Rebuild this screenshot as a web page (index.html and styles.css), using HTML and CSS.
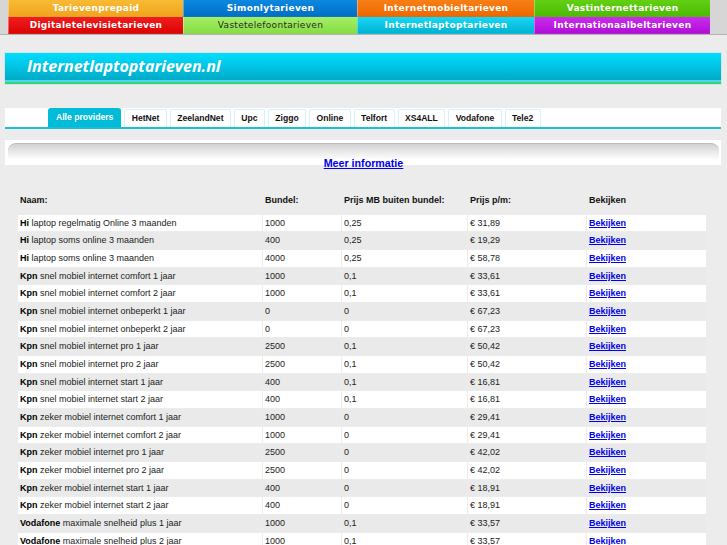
FILE: index.html
```html
<!DOCTYPE html>
<html lang="nl">
<head>
<meta charset="utf-8">
<title>Internetlaptoptarieven.nl</title>
<link rel="stylesheet" href="styles.css">
</head>
<body>
<div class="topbar">
  <nav class="nav">
    <a class="c-prepaid" href="#">Tarievenprepaid</a>
    <a class="c-simonly" href="#">Simonlytarieven</a>
    <a class="c-mobiel" href="#">Internetmobieltarieven</a>
    <a class="c-vastint" href="#">Vastinternettarieven</a>
    <a class="c-tv" href="#">Digitaletelevisietarieven</a>
    <a class="c-tel" href="#">Vastetelefoontarieven</a>
    <a class="c-laptop" href="#">Internetlaptoptarieven</a>
    <a class="c-int" href="#">Internationaalbeltarieven</a>
  </nav>
</div>
<div class="container">
  <div class="brand"><span class="brand-title">Internetlaptoptarieven.nl</span></div>
  <div class="tabs">
    <a class="tab active" href="#">Alle providers</a>
    <a class="tab" href="#">HetNet</a>
    <a class="tab" href="#">ZeelandNet</a>
    <a class="tab" href="#">Upc</a>
    <a class="tab" href="#">Ziggo</a>
    <a class="tab" href="#">Online</a>
    <a class="tab" href="#">Telfort</a>
    <a class="tab" href="#">XS4ALL</a>
    <a class="tab" href="#">Vodafone</a>
    <a class="tab" href="#">Tele2</a>
  </div>
  <div class="info">
    <div class="info-bar"></div>
    <div class="info-link"><a href="#">Meer informatie</a></div>
  </div>
  <table class="rates">
    <thead>
      <tr>
        <th class="w-name">Naam:</th>
        <th class="w-bundel">Bundel:</th>
        <th class="w-mb">Prijs MB buiten bundel:</th>
        <th class="w-pm">Prijs p/m:</th>
        <th class="w-bek">Bekijken</th>
      </tr>
    </thead>
    <tbody>
      <tr><td><b>Hi</b> laptop regelmatig Online 3 maanden</td><td>1000</td><td>0,25</td><td>€ 31,89</td><td><a href="#">Bekijken</a></td></tr>
      <tr><td><b>Hi</b> laptop soms online 3 maanden</td><td>400</td><td>0,25</td><td>€ 19,29</td><td><a href="#">Bekijken</a></td></tr>
      <tr><td><b>Hi</b> laptop soms online 3 maanden</td><td>4000</td><td>0,25</td><td>€ 58,78</td><td><a href="#">Bekijken</a></td></tr>
      <tr><td><b>Kpn</b> snel mobiel internet comfort 1 jaar</td><td>1000</td><td>0,1</td><td>€ 33,61</td><td><a href="#">Bekijken</a></td></tr>
      <tr><td><b>Kpn</b> snel mobiel internet comfort 2 jaar</td><td>1000</td><td>0,1</td><td>€ 33,61</td><td><a href="#">Bekijken</a></td></tr>
      <tr><td><b>Kpn</b> snel mobiel internet onbeperkt 1 jaar</td><td>0</td><td>0</td><td>€ 67,23</td><td><a href="#">Bekijken</a></td></tr>
      <tr><td><b>Kpn</b> snel mobiel internet onbeperkt 2 jaar</td><td>0</td><td>0</td><td>€ 67,23</td><td><a href="#">Bekijken</a></td></tr>
      <tr><td><b>Kpn</b> snel mobiel internet pro 1 jaar</td><td>2500</td><td>0,1</td><td>€ 50,42</td><td><a href="#">Bekijken</a></td></tr>
      <tr><td><b>Kpn</b> snel mobiel internet pro 2 jaar</td><td>2500</td><td>0,1</td><td>€ 50,42</td><td><a href="#">Bekijken</a></td></tr>
      <tr><td><b>Kpn</b> snel mobiel internet start 1 jaar</td><td>400</td><td>0,1</td><td>€ 16,81</td><td><a href="#">Bekijken</a></td></tr>
      <tr><td><b>Kpn</b> snel mobiel internet start 2 jaar</td><td>400</td><td>0,1</td><td>€ 16,81</td><td><a href="#">Bekijken</a></td></tr>
      <tr><td><b>Kpn</b> zeker mobiel internet comfort 1 jaar</td><td>1000</td><td>0</td><td>€ 29,41</td><td><a href="#">Bekijken</a></td></tr>
      <tr><td><b>Kpn</b> zeker mobiel internet comfort 2 jaar</td><td>1000</td><td>0</td><td>€ 29,41</td><td><a href="#">Bekijken</a></td></tr>
      <tr><td><b>Kpn</b> zeker mobiel internet pro 1 jaar</td><td>2500</td><td>0</td><td>€ 42,02</td><td><a href="#">Bekijken</a></td></tr>
      <tr><td><b>Kpn</b> zeker mobiel internet pro 2 jaar</td><td>2500</td><td>0</td><td>€ 42,02</td><td><a href="#">Bekijken</a></td></tr>
      <tr><td><b>Kpn</b> zeker mobiel internet start 1 jaar</td><td>400</td><td>0</td><td>€ 18,91</td><td><a href="#">Bekijken</a></td></tr>
      <tr><td><b>Kpn</b> zeker mobiel internet start 2 jaar</td><td>400</td><td>0</td><td>€ 18,91</td><td><a href="#">Bekijken</a></td></tr>
      <tr><td><b>Vodafone</b> maximale snelheid plus 1 jaar</td><td>1000</td><td>0,1</td><td>€ 33,57</td><td><a href="#">Bekijken</a></td></tr>
      <tr><td><b>Vodafone</b> maximale snelheid plus 2 jaar</td><td>1000</td><td>0,1</td><td>€ 33,57</td><td><a href="#">Bekijken</a></td></tr>
    </tbody>
  </table>
</div>
</body>
</html>
```
FILE: styles.css
```css
html, body {
  margin: 0;
  padding: 0;
}
body {
  background: #ececec;
  font-family: "Liberation Sans", Arial, sans-serif;
  color: #222;
}

/* top navigation */
.topbar {
  background: #d6d6d6;
  border-bottom: 1px solid #b4b4b4;
  padding-left: 8px;
  height: 34px;
}
.nav {
  display: grid;
  grid-template-columns: 175px 174px 177px 176px;
  grid-template-rows: 17px 17px;
}
.nav a {
  display: flex;
  align-items: center;
  justify-content: center;
  font-family: "DejaVu Sans", Verdana, sans-serif;
  font-weight: bold;
  font-size: 9px;
  letter-spacing: 0.3px;
  color: #fff;
  text-decoration: none;
  border-bottom: 1px solid rgba(0, 0, 0, 0.12);
  border-left: 1px solid rgba(255, 255, 255, 0.35);
  box-sizing: border-box;
}
.c-prepaid { background: linear-gradient(#f9bb34, #f0a41e); }
.c-simonly { background: linear-gradient(#0c88e0, #006fc6); }
.c-mobiel { background: linear-gradient(#f87e16, #ee6900); }
.c-vastint { background: linear-gradient(#62d014, #4cbb02); }
.c-tv { background: linear-gradient(#f01e1e, #dc0404); }
.nav .c-tel {
  background: linear-gradient(#a6ee66, #86de44);
  color: #2a2a2a;
  font-weight: normal;
}
.c-laptop { background: linear-gradient(#18d8f6, #00b2d2); }
.c-int { background: linear-gradient(#cc2cec, #b00ed8); }

/* page container */
.container {
  width: 716px;
  margin: 18px 0 0 5px;
}

.brand {
  height: 31px;
  box-shadow: 0 0 0 1px #d6e4e8;
  background: linear-gradient(to bottom,
    #00defe 0, #00aac8 27px,
    #52d6e6 27px, #52d6e6 29px,
    #30d47c 29px, #30d47c 31px);
}
.brand-title {
  display: block;
  padding-left: 22px;
  line-height: 27px;
  font-family: "Open Sans", "DejaVu Sans", sans-serif;
  font-style: italic;
  font-weight: bold;
  font-size: 16px;
  color: #fff;
}

/* provider tabs */
.tabs {
  margin-top: 24px;
  background: #fff;
  height: 19px;
  border-bottom: 2px solid #1cbfd8;
  display: flex;
  align-items: flex-end;
  gap: 3px;
  padding-left: 43px;
}
.tab {
  display: flex;
  align-items: center;
  height: 18px;
  box-sizing: border-box;
  padding: 0 6.4px 2px;
  border: 1px solid #d4f2f8;
  border-bottom: none;
  border-radius: 2px 2px 0 0;
  font-family: "Liberation Sans", Arial, sans-serif;
  font-weight: bold;
  font-size: 8.6px;
  color: #111;
  text-decoration: none;
}
.tab.active {
  height: 19px;
  background: #00bcd8;
  border-color: #00bcd8;
  border-radius: 3px 3px 0 0;
  color: #fff;
  padding: 0 7px 2px;
}

/* info box */
.info {
  margin-top: 11px;
  height: 25px;
  background: #fff;
  padding: 3px 2px 0 3px;
  box-sizing: border-box;
}
.info-bar {
  height: 15px;
  border-top: 1px solid #bbbbbb;
  border-radius: 8px 8px 0 0;
  background: linear-gradient(#d2d2d2, #ececec 60%, #fcfcfc);
}
.info-link {
  text-align: center;
  margin-top: -3px;
  line-height: 12px;
}
.info-link a {
  font-weight: bold;
  font-size: 10.7px;
  color: #0000ee;
}

/* rates table */
.rates {
  margin: 21px 0 0 12px;
  width: 690px;
  table-layout: fixed;
  border-collapse: separate;
  border-spacing: 1px;
  font-size: 9px;
  line-height: 10.67px;
}
.rates th, .rates td {
  box-sizing: border-box;
  text-align: left;
  padding: 3px 2px;
  white-space: nowrap;
  overflow: hidden;
}
.rates th {
  padding: 8px 2px;
  font-weight: bold;
  color: #111;
}
.rates td b { color: #000; }
.w-name { width: 244px; }
.w-bundel { width: 78px; }
.w-mb { width: 125px; }
.w-pm { width: 118px; }
.w-bek { width: 119px; }
.rates tbody tr:nth-child(odd) td { background: #fff; }
.rates tbody tr:nth-child(even) td { background: #eaeaea; }
.rates td a {
  color: #0000ee;
  font-weight: bold;
}
```
